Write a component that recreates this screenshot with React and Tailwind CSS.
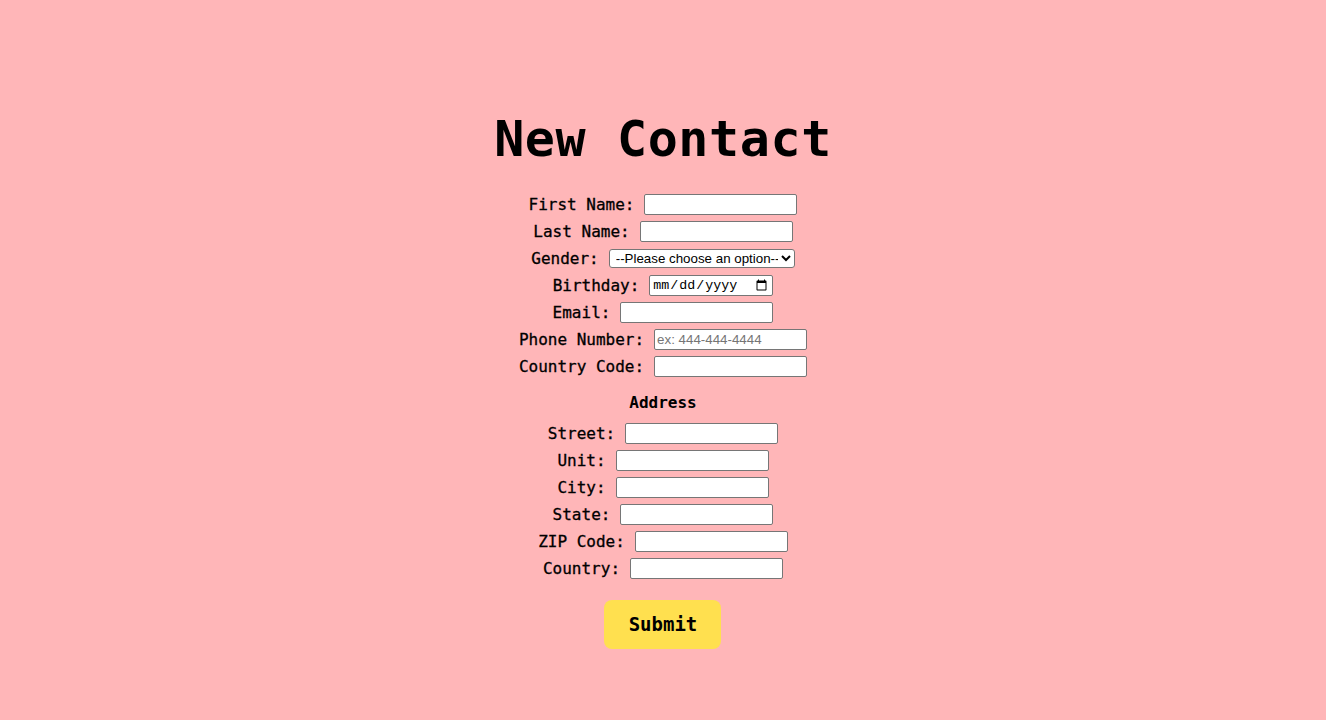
import { useState } from "react";

const rows = [
    { label: "First Name:", type: "text" },
    { label: "Last Name:", type: "text" },
    { label: "Gender:", type: "select" },
    { label: "Birthday:", type: "date" },
    { label: "Email:", type: "email" },
    { label: "Phone Number:", type: "tel", placeholder: "ex: 444-444-4444" },
    { label: "Country Code:", type: "text" },
];

const addressRows = ["Street:", "Unit:", "City:", "State:", "ZIP Code:", "Country:"];

const inputClass =
    "w-[153px] h-[21px] bg-white border border-[#767676] rounded-[2px] px-[2px] text-[13.33px] font-['Liberation_Sans',Arial,sans-serif] text-black placeholder:text-[#757575] outline-none";

function Field({ label, type, placeholder }) {
    let control;
    if (type === "select") {
        control = (
            <select className="w-[186px] h-[19px] bg-white border border-[#767676] rounded-[3px] text-[13.33px] font-['Liberation_Sans',Arial,sans-serif] text-black pl-[2px]">
                <option value="">--Please choose an option--</option>
                <option value="female">Female</option>
                <option value="male">Male</option>
                <option value="other">Other</option>
            </select>
        );
    } else if (type === "date") {
        control = (
            <input
                type="date"
                className="w-[124px] h-[21px] bg-white border border-[#767676] rounded-[2px] px-[2px] text-[13.33px] font-['Liberation_Mono',monospace] text-black"
            />
        );
    } else {
        control = <input type={type} placeholder={placeholder} className={inputClass} />;
    }
    return (
        <div className="flex items-center justify-center h-[27px] gap-[10px]">
            <label className="text-[16px] font-medium text-black whitespace-pre [-webkit-text-stroke:0.3px_black]">
                {label}
            </label>
            {control}
        </div>
    );
}

export default function App() {
    const [sent, setSent] = useState(false);

    return (
        <div className="min-h-screen bg-[#ffb6b8] flex flex-col items-center pt-[113px] font-['DejaVu_Sans_Mono','Liberation_Mono',monospace] text-black">
            <h1 className="text-[50px] leading-[52px] font-bold tracking-[0.6px]">New Contact</h1>

            <form
                className="mt-[26px] flex flex-col items-center"
                onSubmit={(e) => {
                    e.preventDefault();
                    setSent(true);
                }}
            >
                {rows.map((r) => (
                    <Field key={r.label} {...r} />
                ))}

                <h3 className="mt-[11px] text-[16px] leading-[24px] font-bold">Address</h3>

                <div className="mt-[5px] flex flex-col items-center">
                    {addressRows.map((l) => (
                        <Field key={l} label={l} type="text" />
                    ))}
                </div>

                <button
                    type="submit"
                    className="mt-[18px] w-[117px] h-[49px] rounded-[8px] bg-[#ffe04f] text-[19px] font-bold cursor-pointer"
                >
                    {sent ? "Sent" : "Submit"}
                </button>
            </form>
        </div>
    );
}
